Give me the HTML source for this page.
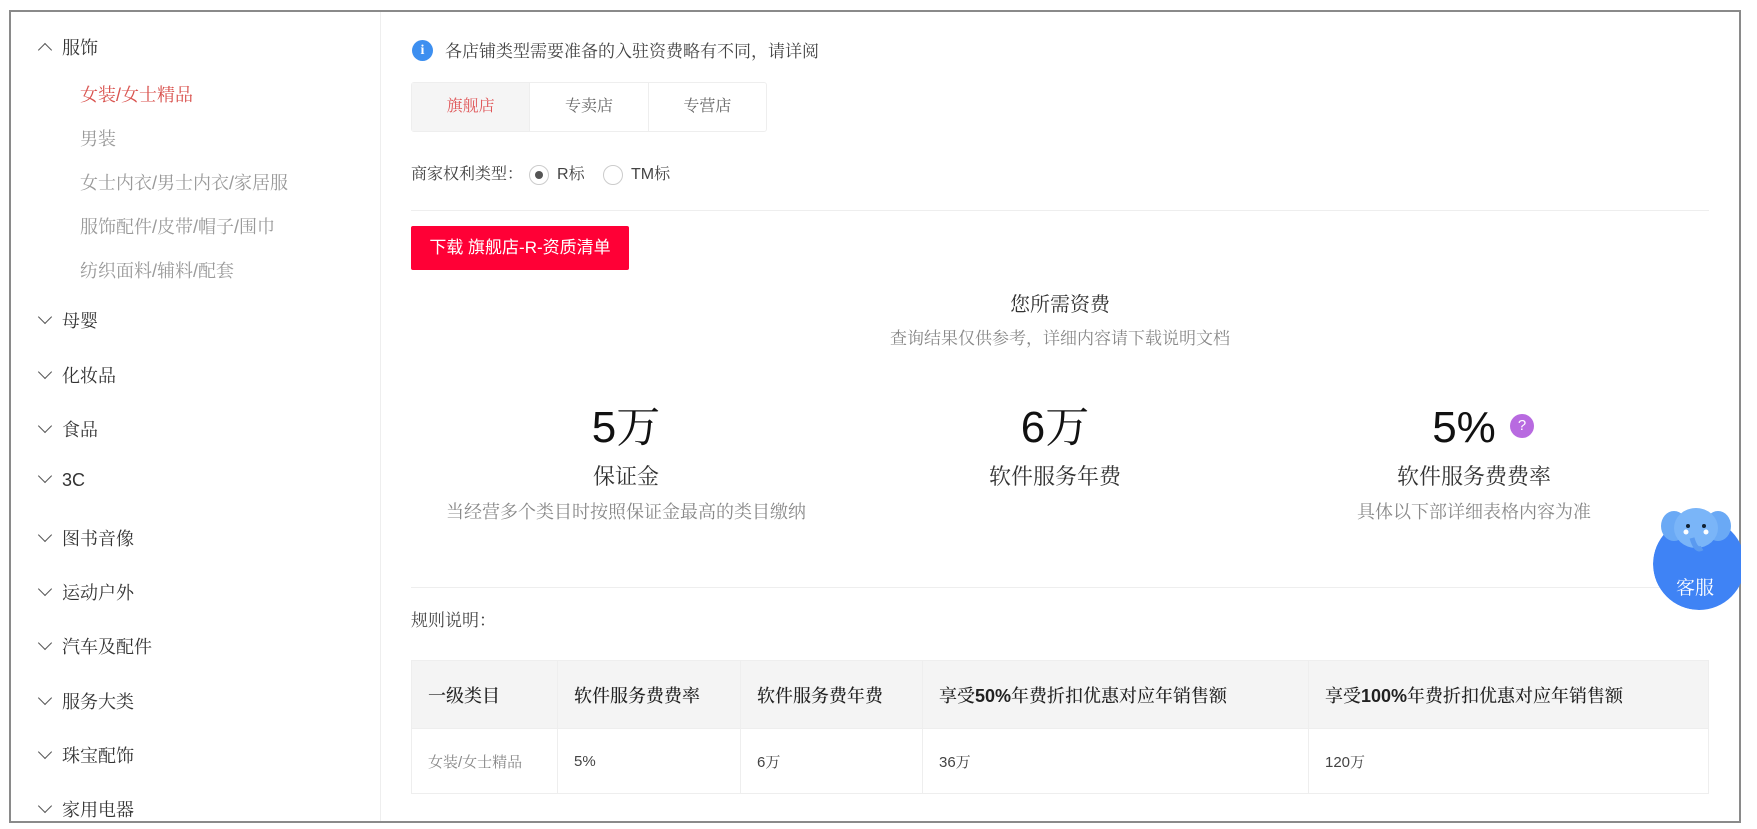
<!DOCTYPE html>
<html><head><meta charset="utf-8"><style>
*{margin:0;padding:0;box-sizing:border-box}
body{width:1757px;height:829px;background:#fff;position:relative;overflow:hidden;font-family:"Liberation Sans","Noto Serif CJK SC",serif;color:#333}
.frame{position:absolute;left:9px;top:10px;width:1732px;height:813px;border:2px solid #8a8a8a}
.side{position:absolute;left:11px;top:12px;width:370px;height:809px;border-right:1px solid #eee}
.abs{position:absolute;white-space:nowrap}
.cat{font-size:18px;color:#333;left:40px}
.cat i{display:inline-block;width:10px;height:10px;border-left:1.5px solid #555;border-bottom:1.5px solid #555;transform:rotate(-45deg);margin-right:12px;position:relative;top:-5px}
.cat i.up{transform:rotate(135deg);top:1px}
.sub{font-size:18px;color:#999;left:80px}
.tabs{left:411px;top:82px;width:356px;height:50px;border:1px solid #eee;border-radius:3px;display:flex}
.tabs div{flex:1;text-align:center;line-height:48px;font-size:16px;color:#666;border-right:1px solid #eee}
.tabs div:first-child{background:#f5f5f5;color:#e0585a}
.tabs div:last-child{border-right:none}
.radio{display:inline-block;width:20px;height:20px;border:1px solid #ccc;border-radius:50%;vertical-align:middle;position:relative;margin:0 8px 0 6px}
.radio.on::after{content:"";position:absolute;left:5px;top:5px;width:8px;height:8px;border-radius:50%;background:#555}
.btn{left:411px;top:226px;width:218px;height:44px;background:#ff0036;border-radius:2px;color:#fff;font-size:17px;line-height:44px;text-align:center;font-family:"Liberation Sans","Noto Sans CJK SC",sans-serif}
.big{font-size:44px;color:#111;text-align:center;width:400px;margin-left:-200px;top:400px;height:56px;line-height:56px}
.lbl{font-size:22px;color:#333;text-align:center;width:500px;margin-left:-250px;top:460px}
.desc{font-size:18px;color:#888;text-align:center;width:500px;margin-left:-250px;top:498px}
table{position:absolute;left:411px;top:660px;width:1298px;border-collapse:collapse;font-family:"Liberation Sans","Noto Serif CJK SC",serif}
td,th{border:1px solid #eee;text-align:left;padding-left:16px}
th{background:#f4f4f4;height:68px;font-size:18px;font-weight:500;color:#222}
th b{font-weight:700}
td{height:65px;font-size:15px;color:#444}
.q{position:absolute;left:1510px;top:414px;width:24px;height:24px;border-radius:50%;background:#b86ae0;color:#fff;font-size:15px;line-height:24px;text-align:center;font-family:"Liberation Sans",sans-serif}
</style></head><body>
<div class="side"></div>
<div class="abs cat" style="top:34px"><i class="up"></i>服饰</div>
<div class="abs sub" style="top:81px;color:#d9534f">女装/女士精品</div>
<div class="abs sub" style="top:125px">男装</div>
<div class="abs sub" style="top:169px">女士内衣/男士内衣/家居服</div>
<div class="abs sub" style="top:213px">服饰配件/皮带/帽子/围巾</div>
<div class="abs sub" style="top:257px">纺织面料/辅料/配套</div>
<div class="abs cat" style="top:307px"><i></i>母婴</div>
<div class="abs cat" style="top:362px"><i></i>化妆品</div>
<div class="abs cat" style="top:416px"><i></i>食品</div>
<div class="abs cat" style="top:470px"><i></i>3C</div>
<div class="abs cat" style="top:525px"><i></i>图书音像</div>
<div class="abs cat" style="top:579px"><i></i>运动户外</div>
<div class="abs cat" style="top:633px"><i></i>汽车及配件</div>
<div class="abs cat" style="top:688px"><i></i>服务大类</div>
<div class="abs cat" style="top:742px"><i></i>珠宝配饰</div>
<div class="abs cat" style="top:796px"><i></i>家用电器</div>

<div class="abs" style="left:412px;top:40px;width:21px;height:21px;border-radius:50%;background:#3d8ff0;color:#fff;font-size:14px;font-weight:bold;text-align:center;line-height:21px;font-family:'Liberation Serif',serif">i</div>
<div class="abs" style="left:445px;top:37px;font-size:17px;color:#444">各店铺类型需要准备的入驻资费略有不同，请详阅</div>
<div class="abs tabs"><div>旗舰店</div><div>专卖店</div><div>专营店</div></div>
<div class="abs" style="left:411px;top:161px;font-size:16px;color:#444">商家权利类型：<span class="radio on"></span>R标 <span class="radio" style="margin-left:14px"></span>TM标</div>
<div class="abs" style="left:411px;top:210px;width:1298px;border-top:1px solid #eee"></div>
<div class="abs btn">下载 旗舰店-R-资质清单</div>
<div class="abs" style="left:810px;width:500px;text-align:center;top:288px;font-size:20px;color:#333">您所需资费</div>
<div class="abs" style="left:810px;width:500px;text-align:center;top:324px;font-size:17px;color:#888">查询结果仅供参考，详细内容请下载说明文档</div>
<div class="abs big" style="left:626px">5万</div>
<div class="abs big" style="left:1055px">6万</div>
<div class="abs big" style="left:1464px">5%</div>
<div class="q">?</div>
<div class="abs lbl" style="left:626px">保证金</div>
<div class="abs lbl" style="left:1055px">软件服务年费</div>
<div class="abs lbl" style="left:1474px">软件服务费费率</div>
<div class="abs desc" style="left:626px">当经营多个类目时按照保证金最高的类目缴纳</div>
<div class="abs desc" style="left:1474px">具体以下部详细表格内容为准</div>
<div class="abs" style="left:411px;top:587px;width:1298px;border-top:1px solid #eee"></div>
<div class="abs" style="left:411px;top:606px;font-size:17px;color:#444">规则说明：</div>
<table>
<tr><th style="width:146px">一级类目</th><th style="width:183px">软件服务费费率</th><th style="width:182px">软件服务费年费</th><th style="width:386px">享受<b>50%</b>年费折扣优惠对应年销售额</th><th>享受<b>100%</b>年费折扣优惠对应年销售额</th></tr>
<tr><td style="color:#888">女装/女士精品</td><td>5%</td><td>6万</td><td>36万</td><td>120万</td></tr>
</table>
<div class="frame"></div>
<div class="abs" style="left:1653px;top:518px;width:88px;height:92px;border-radius:46px 0 0 46px / 46px 0 0 46px;overflow:hidden"><div style="width:92px;height:92px;border-radius:50%;background:#3f83f5"></div></div>
<svg class="abs" style="left:1660px;top:506px" width="72" height="50" viewBox="0 0 72 50">
<ellipse cx="14" cy="20" rx="13" ry="15" fill="#6aa9f5"/><ellipse cx="58" cy="20" rx="13" ry="15" fill="#6aa9f5"/>
<ellipse cx="36" cy="22" rx="22" ry="20" fill="#7ab5f8"/>
<path d="M32 32 q4 14 10 10" stroke="#5a9af0" stroke-width="5" fill="none"/>
<circle cx="28" cy="20" r="2" fill="#123"/><circle cx="44" cy="20" r="2" fill="#123"/>
<circle cx="26" cy="26" r="2.5" fill="#fff"/><circle cx="46" cy="26" r="2.5" fill="#fff"/>
</svg>
<div class="abs" style="left:1676px;top:573px;font-size:19px;color:#fff">客服</div>
</body></html>
